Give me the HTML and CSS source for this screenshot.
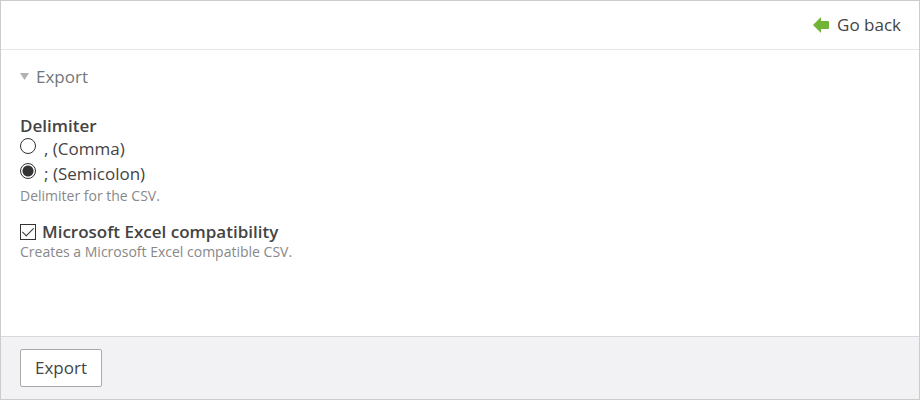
FILE: index.html
```html
<!DOCTYPE html>
<html lang="en">
<head>
<meta charset="utf-8">
<title>Export</title>
<link rel="stylesheet" href="styles.css">
</head>
<body>
<form class="panel">
  <header class="topbar">
    <a class="back" href="#">
      <svg class="back-icon" viewBox="0 0 16 16" aria-hidden="true"><path d="M0 8 8 0V4H15Q16 4 16 5V11Q16 12 15 12H8V16Z"/></svg>
      Go back
    </a>
  </header>
  <main class="content">
    <details class="section" open>
      <summary class="section-title"><svg class="caret" viewBox="0 0 9 8" aria-hidden="true"><path d="M0 0H9L4.5 7Z"/></svg>Export</summary>
      <fieldset class="group">
        <legend class="label">Delimiter</legend>
        <label class="option"><input class="radio" type="radio" name="delimiter"><span>, (Comma)</span></label>
        <label class="option"><input class="radio" type="radio" name="delimiter" checked><span>; (Semicolon)</span></label>
        <p class="hint">Delimiter for the CSV.</p>
      </fieldset>
      <div class="group">
        <label class="label check-row"><input class="check" type="checkbox" checked>Microsoft Excel compatibility</label>
        <p class="hint">Creates a Microsoft Excel compatible CSV.</p>
      </div>
    </details>
  </main>
  <footer class="actions">
    <button class="button" type="button">Export</button>
  </footer>
</form>
</body>
</html>
```
FILE: styles.css
```css
* { box-sizing: border-box; }
body {
  margin: 0;
  font: 17px/24px "Open Sans", sans-serif;
  color: #444;
}
.panel {
  min-height: 100vh;
  display: flex;
  flex-direction: column;
  border: 1px solid #ccc;
  background: #fff;
}
.topbar {
  display: flex;
  justify-content: flex-end;
  padding: 12px 18px;
  border-bottom: 1px solid #e5e5e5;
}
.back {
  display: flex;
  align-items: center;
  gap: 8px;
  color: inherit;
  text-decoration: none;
}
.back-icon { width: 16px; height: 16px; fill: #72b536; }
.content { flex: 1; padding: 15px 19px; }
.section-title {
  display: flex;
  align-items: center;
  gap: 7px;
  margin-bottom: 25px;
  color: #72777c;
  list-style: none;
}
.caret { width: 9px; height: 8px; fill: #b0b2b5; }
.group { margin: 0 0 16px; padding: 0; border: 0; }
.label { padding: 0; font-weight: 600; }
.option { display: flex; gap: 8px; margin-bottom: 3px; line-height: 22px; }
.radio, .check {
  appearance: none;
  flex: none;
  width: 16px;
  height: 16px;
  margin: 0;
  border: 1px solid #333;
  background: #fff;
}
.radio { border-radius: 50%; }
.radio:checked { background: radial-gradient(circle, #333 5px, #fff 6px); }
.check { display: grid; justify-content: center; }
.check:checked::before {
  content: "";
  width: 5px;
  height: 10px;
  border: solid #333;
  border-width: 0 1px 1px 0;
  transform: rotate(45deg);
}
.check-row { display: flex; align-items: center; gap: 6px; }
.hint { margin: 0; font-size: 14px; line-height: 16px; color: #888; }
.actions {
  padding: 12px 19px;
  border-top: 1px solid #d8d8dc;
  background: #f2f2f4;
}
.button {
  height: 38px;
  padding: 0 14px;
  border: 1px solid #aaa;
  border-radius: 2px;
  background: #fff;
  color: inherit;
  font: inherit;
}
```
